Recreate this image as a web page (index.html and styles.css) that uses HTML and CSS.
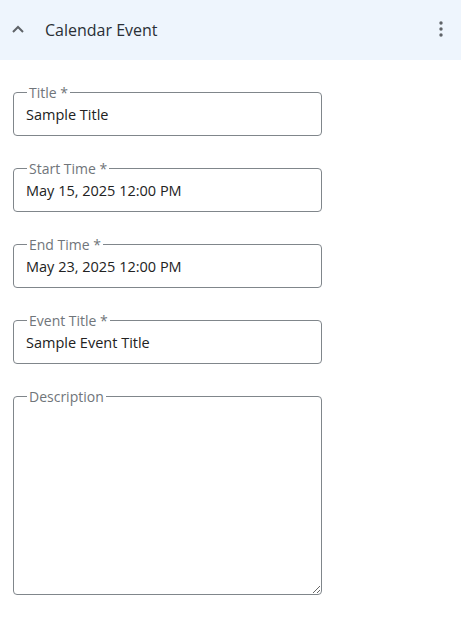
FILE: index.html
```html
<!DOCTYPE html>
<html>
<head>
<meta charset="utf-8">
<link rel="stylesheet" href="styles.css">
</head>
<body>
<div class="panel">
  <div class="header">
    <svg class="chev" width="14" height="10" viewBox="0 0 14 10"><path d="M2 8 L7 3 L12 8" fill="none" stroke="#5f6368" stroke-width="2"/></svg>
    <span class="title">Calendar Event</span>
    <svg class="kebab" width="4" height="16" viewBox="0 0 4 16"><circle cx="2" cy="2" r="1.7" fill="#5f6368"/><circle cx="2" cy="8" r="1.7" fill="#5f6368"/><circle cx="2" cy="14" r="1.7" fill="#5f6368"/></svg>
  </div>
  <div class="form">
    <fieldset class="field"><legend>Title *</legend><div class="value">Sample Title</div></fieldset>
    <fieldset class="field"><legend>Start Time *</legend><div class="value">May 15, 2025 12:00 PM</div></fieldset>
    <fieldset class="field"><legend>End Time *</legend><div class="value">May 23, 2025 12:00 PM</div></fieldset>
    <fieldset class="field"><legend>Event Title *</legend><div class="value">Sample Event Title</div></fieldset>
    <fieldset class="field"><legend>Description</legend><textarea class="ta"></textarea></fieldset>
  </div>
</div>
</body>
</html>
```
FILE: styles.css
```css
html, body { margin: 0; padding: 0; background: #fff; }
body { font-family: "Open Sans", "Noto Sans", sans-serif; color: #222; }
.header {
  height: 60px;
  background: #eef5fd;
  display: flex;
  align-items: center;
  padding: 0 18px 0 11px;
}
.chev { margin-top: -2px; }
.title { margin-left: 20px; font-size: 16px; color: #2a2f36; flex: 1; }
.kebab { margin-top: -2px; }
.form { padding: 23px 0 0 13px; }
.field {
  width: 309px;
  box-sizing: border-box;
  margin: 0 0 23px 0;
  padding: 0 12px;
  border: 1px solid #80868b;
  border-radius: 4px;
  min-width: 0;
}
.field legend {
  margin-left: 1px;
  padding: 0 2px;
  font-size: 14px;
  line-height: 19px;
  color: #70757a;
}
.value {
  font-size: 14.5px;
  line-height: 20px;
  height: 33px;
  padding-top: 3px;
  box-sizing: border-box;
}
.ta {
  display: block;
  width: calc(100% + 24px);
  height: 188px;
  border: none;
  outline: none;
  resize: vertical;
  margin: 0 -12px;
  padding: 0 12px;
  box-sizing: border-box;
  font-family: inherit;
  background: transparent;
}
```
